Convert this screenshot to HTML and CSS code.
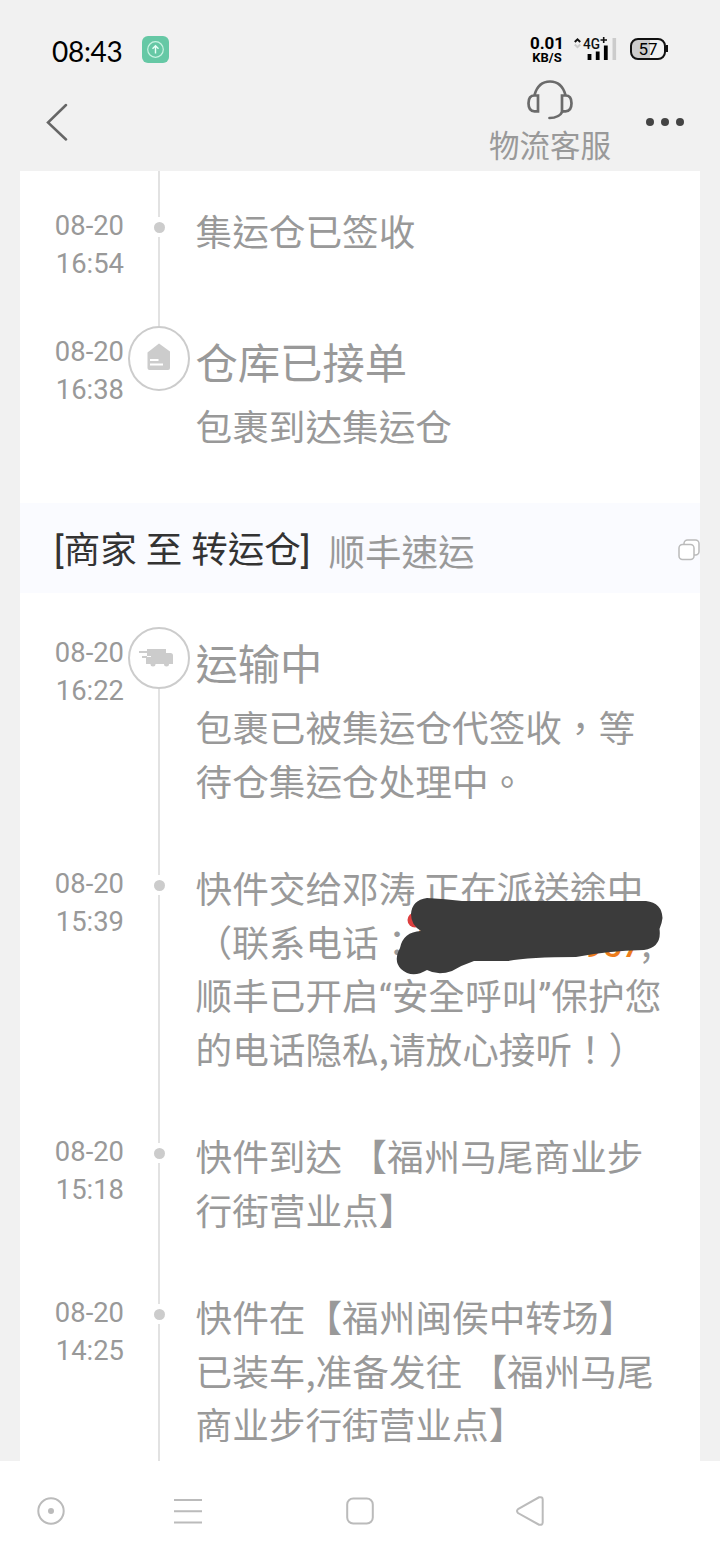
FILE: index.html
```
<!DOCTYPE html>
<html lang="zh-Hant">
<head>
  <meta charset="UTF-8">
  <meta name="viewport" content="width=device-width, initial-scale=1.0">
  <title>物流详情</title>
  <link rel="stylesheet" href="styles.css">
</head>
<body>
  <div class="statusbar">
    <span class="clock">08:43</span>
    <svg class="app-badge" width="27" height="27" viewBox="0 0 27 27">
      <rect width="27" height="27" rx="6" fill="#66c8a5"/>
      <circle cx="13.5" cy="13.5" r="7.8" fill="none" stroke="#c9f3e2" stroke-width="1.2"/>
      <path d="M13.5 17.5V10M10.5 12.8l3-3 3 3" fill="none" stroke="#eafff7" stroke-width="1.4"/>
    </svg>
    <div class="speed"><b>0.01</b><span>KB/S</span></div>
    <svg class="signal" width="44" height="36" viewBox="0 -8 44 36">
      <path d="M1.800 5l2.700-2.700L7.200 5" fill="none" stroke="#111" stroke-width="2"/>
      <path d="M1.800 7.500l2.700 2.700 2.700-2.700" fill="none" stroke="#ccc" stroke-width="2"/>
      <text x="10" y="11.500" class="net" textLength="17" lengthAdjust="spacingAndGlyphs">4G</text>
      <path d="M27.500 3h6.500M30.700 0v6" stroke="#111" stroke-width="1.600"/>
      <path d="M16.500 17v6M24.700 14.500V23M32.800 8.500V23" stroke="#000" stroke-width="3.800"/>
      <path d="M41.300 1v22" stroke="#ccc" stroke-width="3.600"/>
    </svg>
    <div class="battery">57</div>
  </div>
  <div class="navbar">
    <svg class="back" width="24" height="38" viewBox="0 0 24 38">
      <path d="M21 2L3 19.500 21 36.500" fill="none" stroke="#666" stroke-width="2.500" stroke-linecap="round"/>
    </svg>
    <div class="service">
      <svg width="46" height="40" viewBox="0 0 46 40">
        <g fill="none" stroke="#6b6b6b" stroke-width="2.700">
          <path d="M7.500 15C10 6 16 1.500 23 1.500s13 4.500 15.500 13.500"/>
          <path d="M11 15.500v15.800H7.500c-4 0-6-2.500-6-8s2-7.800 6-7.800zM35 15.500v15.800h3.500c4 0 6-2.500 6-8s-2-7.800-6-7.800z"/>
          <path d="M35.500 31.500c-2 4-7 6.500-13 6.500" stroke-linecap="round"/>
        </g>
      </svg>
      <span>物流客服</span>
    </div>
    <div class="more"><i></i><i></i><i></i></div>
  </div>

  <div class="card">
    <div class="entry first">
      <div class="date">08-20<br>16:54</div>
      <div class="marker"><i class="line top"></i><i class="dot"></i><i class="line"></i></div>
      <div class="info"><p>集运仓已签收</p></div>
    </div>
    <div class="entry last">
      <div class="date">08-20<br>16:38</div>
      <div class="marker">
        <i class="line icon-top"></i>
        <div class="circle tall">
          <svg width="24" height="28" viewBox="0 0 24 28">
            <path d="M12 .5l11 8V25q0 2-2 2H2.500q-2 0-2-2V9.500z" fill="#ccc"/>
            <path d="M3 17h8.500M3 21.500h13" stroke="#fff" stroke-width="2"/>
          </svg>
        </div>
      </div>
      <div class="info"><h3>仓库已接单</h3><p>包裹到达集运仓</p></div>
    </div>

    <div class="section">
      <span class="route">[商家 至 转运仓]</span>
      <span class="carrier">顺丰速运</span>
      <svg class="copy" width="22" height="22" viewBox="0 0 22 22">
        <g fill="#fff" stroke="#bbb" stroke-width="1.500">
          <rect x="6" y="1" width="15" height="15" rx="3.500"/>
          <rect x="1" y="5.500" width="15" height="15" rx="3.500"/>
        </g>
      </svg>
    </div>

    <div class="entry">
      <div class="date">08-20<br>16:22</div>
      <div class="marker">
        <i class="line icon-top hidden"></i>
        <div class="circle">
          <svg class="truck" width="36" height="20" viewBox="0 0 36 20">
            <path d="M8 1h19v4h4.500q2.500 0 2.500 2.500V16H30a2.500 2.500 0 0 1-5 0h-8.500a2.500 2.500 0 0 1-5 0H7V9h5V8H8z" fill="#ccc"/>
            <path d="M0 4h9M3 9h5" stroke="#ccc" stroke-width="2"/>
          </svg>
        </div>
        <i class="line"></i>
      </div>
      <div class="info"><h3>运输中</h3><p>包裹已被集运仓代签收，等<br>待仓集运仓处理中。</p></div>
    </div>
    <div class="entry">
      <div class="date">08-20<br>15:39</div>
      <div class="marker"><i class="line top"></i><i class="dot"></i><i class="line"></i></div>
      <div class="info">
        <p>快件交给邓涛 正在派送途中<br><span class="bracket">（</span>联系电话：<span class="phone">957</span>,<br>顺丰已开启<span class="quote">“</span>安全呼叫<span class="quote">”</span>保护您<br>的电话隐私,请放心接听！<span class="bracket">）</span></p>
        <svg class="scribble" width="280" height="90" viewBox="390 890 280 90">
          <circle cx="415" cy="920" r="7.500" fill="#dc3f3f"/>
          <path d="M419 932h12" stroke="#ee7d1c" stroke-width="3"/>
          <path d="M427 898Q446 899 462 901H646Q662 903 662.500 918Q662 923 659.500 929Q662 947 644 950Q606 951 576 957Q530 957 508 961L474 961Q462 965 452 971Q438 976 427 970Q412 979 401 969Q393 961 400 948Q403 932 421 931Q411 925 411 914Q412 900 427 898Z" fill="#3b3b3b"/>
        </svg>
      </div>
    </div>
    <div class="entry">
      <div class="date">08-20<br>15:18</div>
      <div class="marker"><i class="line top"></i><i class="dot"></i><i class="line"></i></div>
      <div class="info"><p>快件到达 <span class="bracket">【</span>福州马尾商业步<br>行街营业点<span class="bracket">】</span></p></div>
    </div>
    <div class="entry">
      <div class="date">08-20<br>14:25</div>
      <div class="marker"><i class="line top"></i><i class="dot"></i><i class="line"></i></div>
      <div class="info"><p>快件在<span class="bracket">【</span>福州闽侯中转场<span class="bracket">】</span><br>已装车,准备发往 <span class="bracket">【</span>福州马尾<br>商业步行街营业点<span class="bracket">】</span></p></div>
    </div>
  </div>

  <div class="sysnav">
    <svg width="28" height="30" viewBox="0 0 28 30"><circle cx="14" cy="15" r="12.700"/><circle cx="14" cy="15" r="3" class="solid"/></svg>
    <svg width="28" height="30" viewBox="0 0 28 30"><path d="M0 4h28M0 15.300h28M0 26.500h28"/></svg>
    <svg width="28" height="30" viewBox="0 0 28 30"><rect x="1.200" y="2.500" width="25.600" height="25" rx="6"/></svg>
    <svg width="28" height="30" viewBox="0 0 28 30"><path d="M2 13.200L23 1.300Q26.500.5 26.700 3.500v23q-.2 3-3.700 2.200L2 17q-2-2 0-3.800z"/></svg>
  </div>
</body>
</html>
```
FILE: styles.css
```
* { box-sizing: border-box; }
body {
  margin: 0;
  width: 720px;
  height: 1560px;
  overflow: hidden;
  display: flex;
  flex-direction: column;
  background: #f1f1f1;
  color: #999;
  font-family: "Noto Sans CJK TC", "Noto Sans CJK SC", sans-serif;
  text-spacing-trim: space-all;
}
p, h3 { margin: 0; font-weight: 400; }
svg { display: block; flex: none; }

.statusbar {
  height: 76px;
  flex: none;
  display: flex;
  align-items: flex-start;
  padding: 29px 52px 0;
  color: #000;
}
.clock {
  width: 90px;
  margin-top: 6px;
  font: 28px/32px Lato, sans-serif;
  letter-spacing: -0.3px;
}
.app-badge { margin-top: 7px; }
.speed {
  margin: 6px 0 0 361px;
  width: 34px;
  display: flex;
  flex-direction: column;
  align-items: center;
  font: 500 13.5px/13px Roboto, sans-serif;
}
.speed b { font-size: 17px; line-height: 16px; }
.speed span { font-weight: 700; font-size: 13px; }
.signal { margin-left: 9px; }
.net { font: 500 15px Roboto, sans-serif; fill: #111; }
.battery {
  position: relative;
  margin: 9px 0 0 13px;
  width: 36px;
  height: 22px;
  border: 2.5px solid #111;
  border-radius: 8px;
  background: linear-gradient(90deg, #ccc 57%, #f1f1f1 57%);
  font: 17px/18px Roboto, sans-serif;
  text-align: center;
}
.battery::after {
  content: "";
  position: absolute;
  right: -4px;
  top: 5px;
  width: 2px;
  height: 7px;
  background: #111;
}

.navbar {
  height: 95px;
  flex: none;
  display: flex;
  align-items: flex-start;
  padding-left: 45px;
}
.back { margin-top: 27px; }
.service {
  margin: 4px 0 0 420px;
  width: 122px;
  display: flex;
  flex-direction: column;
  align-items: center;
  font-size: 30.5px;
  line-height: 46px;
}
.service span { margin-top: 1px; white-space: nowrap; }
.more { display: flex; gap: 7px; margin: 42px 0 0 35px; }
.more i { width: 8px; height: 8px; border-radius: 50%; background: #444; }

.card {
  height: 1290px;
  flex: none;
  margin: 0 20px;
  background: #fff;
  overflow: hidden;
}
.entry { display: flex; padding-left: 31px; }
.first { height: 136px; }
.last { height: 196px; }
.date {
  width: 73px;
  padding-top: 27px;
  text-align: right;
  font: 27.4px/37.5px Roboto, sans-serif;
}
.first .date { padding-top: 37px; }
.marker {
  width: 62px;
  margin-left: 4px;
  display: flex;
  flex-direction: column;
  align-items: center;
}
.line { width: 2px; flex: 1; background: #e2e2e2; }
.top { flex: none; height: 36px; }
.first .top { height: 46px; }
.icon-top { flex: none; height: 19px; }
.hidden { visibility: hidden; }
.dot {
  width: 11px;
  height: 11px;
  margin: 5px 0 4px;
  border-radius: 50%;
  background: #ccc;
}
.circle {
  width: 62px;
  height: 62px;
  flex: none;
  display: flex;
  align-items: center;
  justify-content: center;
  border: 2px solid #ccc;
  border-radius: 50%;
}
.tall { height: 65px; padding-bottom: 3px; }
.truck { margin-left: -4px; }
.info {
  position: relative;
  flex: 1;
  margin-left: 5.5px;
  padding: 22px 0 32px;
  white-space: nowrap;
}
.first .info { padding-top: 33px; }
.info h3 { font-size: 42.3px; line-height: 64px; margin-bottom: 6px; }
.info p { font-size: 36.65px; line-height: 53.5px; }
.quote, .phone { font-family: Roboto, sans-serif; line-height: 0; }
.bracket { font-family: "Noto Sans CJK SC", sans-serif; }
.phone { margin-left: 168px; color: #ee7d1c; font-size: 34px; font-weight: 500; }
/* pen marks over the phone number */
.scribble { position: absolute; left: 194.5px; top: 51px; }

.section {
  height: 90px;
  margin-bottom: 15px;
  display: flex;
  align-items: center;
  padding-left: 34px;
  background: #fafbff;
  font-size: 36.5px;
  white-space: nowrap;
}
.route { margin-top: -2px; color: #333; font-family: Roboto, "Noto Sans CJK TC", sans-serif; }
.carrier { margin: 4px 0 0 18px; }
.copy { margin: 4px 0 0 auto; }

.sysnav {
  height: 99px;
  flex: none;
  display: flex;
  align-items: center;
  padding-left: 37px;
  background: #fff;
}
.sysnav svg { fill: none; stroke: #bbb; stroke-width: 2; }
.sysnav svg + svg { margin-left: 109px; }
.sysnav svg:nth-child(3) { margin-left: 144px; }
.sysnav svg:nth-child(4) { margin-left: 142px; }
.sysnav .solid { fill: #bbb; stroke: none; }
```
